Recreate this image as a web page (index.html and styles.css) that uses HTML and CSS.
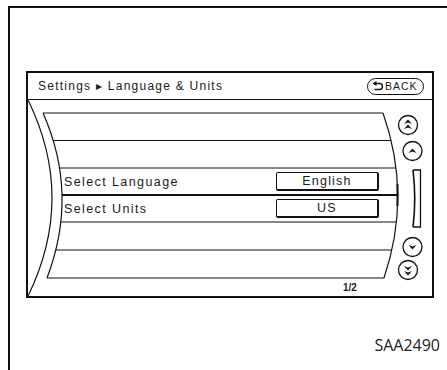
FILE: index.html
```html
<!DOCTYPE html>
<html lang="en">
<head>
    <meta charset="UTF-8">
    <meta name="viewport" content="width=device-width, initial-scale=1.0">
    <title>Settings - Language &amp; Units</title>
    <link rel="stylesheet" href="styles.css">
</head>
<body>
    <div class="frame">
        <div class="screen">
            <div class="header">
                <span class="title">Settings ▸ Language &amp; Units</span>
                <span class="back">
                    <svg class="back-icon" viewBox="0 0 12 10" width="12" height="10">
                        <path d="M4 2.5 H7.5 A3 3 0 0 1 7.5 8.5 H2.5" fill="none" stroke="#111" stroke-width="1.4"/>
                        <path d="M0.5 2.5 L4.5 0 L4.5 5 Z" fill="#111"/>
                    </svg>BACK
                </span>
            </div>
            <div class="panel">
                <!-- curved list frame, row lines and scroll buttons -->
                <svg class="art" viewBox="28 100 404 196" width="404" height="196">
                    <g fill="none" stroke="#111" stroke-width="1.2">
                        <path d="M28 100 Q76 198 28 296"/>
                        <path d="M43 113 Q79 194 47 278"/>
                        <path d="M383 113 Q412 195 384 278"/>
                        <line x1="43" y1="113" x2="383" y2="113"/>
                        <line x1="53.2" y1="140.5" x2="391.2" y2="140.5"/>
                        <line x1="59.5" y1="168" x2="396" y2="168"/>
                        <line x1="60.8" y1="222" x2="396.4" y2="222"/>
                        <line x1="55.8" y1="250" x2="391.8" y2="250"/>
                        <line x1="47" y1="278" x2="384" y2="278"/>
                        <line x1="62" y1="195" x2="398" y2="195" stroke-width="2.2"/>
                        <line x1="397.5" y1="184" x2="397.5" y2="206" stroke-width="2"/>

                        <circle cx="408" cy="125" r="9.5" stroke-width="1.3"/>
                        <circle cx="412.5" cy="151" r="9.5" stroke-width="1.3"/>
                        <circle cx="412.5" cy="247" r="9.5" stroke-width="1.3"/>
                        <circle cx="408" cy="270" r="9.5" stroke-width="1.3"/>

                        <path d="M413 170 H420.5 V227 H413" stroke-width="1.3"/>
                        <path d="M413 170 Q416.5 198.5 413 227" stroke-width="1.6"/>
                    </g>
                    <g fill="#111">
                        <path d="M404 124 L408 119.5 L412 124 L408 122.5 Z"/>
                        <path d="M404 129 L408 124.5 L412 129 L408 127.5 Z"/>
                        <path d="M408.5 153 L412.5 148.5 L416.5 153 L412.5 151.5 Z"/>
                        <path d="M408.5 245 L412.5 249.5 L416.5 245 L412.5 246.5 Z"/>
                        <path d="M404 266 L408 270.5 L412 266 L408 267.5 Z"/>
                        <path d="M404 271 L408 275.5 L412 271 L408 272.5 Z"/>
                    </g>
                </svg>
                <div class="list">
                    <div class="row">
                        <span class="label">Select Language</span>
                        <span class="value">English</span>
                    </div>
                    <div class="row">
                        <span class="label">Select Units</span>
                        <span class="value">US</span>
                    </div>
                </div>
                <div class="pager">1/2</div>
            </div>
        </div>
        <div class="code">SAA2490</div>
    </div>
</body>
</html>
```

FILE: styles.css
```css
body {
    margin: 0;
    background-color: #fff;
    font-family: "Liberation Sans", Arial, sans-serif;
    color: #1a1a1a;
    overflow: hidden;
}
.frame {
    margin: 6px 0 0 8px;
    height: 362px;
    border-left: 2px solid #111;
    border-top: 2px solid #111;
    display: flex;
    flex-direction: column;
}
.screen {
    margin: 63px 0 0 16px;
    width: 408px;
    height: 227px;
    box-sizing: border-box;
    border: 2px solid #111;
    display: flex;
    flex-direction: column;
}
.header {
    height: 27px;
    box-sizing: border-box;
    border-bottom: 1px solid #111;
    display: flex;
    align-items: center;
    justify-content: space-between;
    padding: 0 8px 0 10px;
}
.title {
    font-size: 12px;
    letter-spacing: 1.25px;
}
.back {
    display: inline-flex;
    align-items: center;
    gap: 1px;
    width: 57px;
    height: 17px;
    box-sizing: border-box;
    padding-left: 4px;
    border: 1.3px solid #111;
    border-radius: 9px;
    font-size: 10.5px;
    letter-spacing: 1px;
}
.back-icon {
    display: block;
}
.panel {
    position: relative;
    flex: 1;
    display: flex;
    flex-direction: column;
}
.art {
    position: absolute;
    left: 0;
    top: 0;
}
.list {
    position: relative;
    padding-top: 68px;
}
.row {
    height: 27px;
    display: flex;
    align-items: center;
    padding-left: 36px;
}
.label {
    width: 212px;
    font-size: 12.5px;
    letter-spacing: 1.4px;
}
.value {
    width: 103px;
    height: 19px;
    box-sizing: border-box;
    border: 1px solid #111;
    border-right-width: 2px;
    border-bottom-width: 2px;
    border-radius: 2px;
    display: flex;
    align-items: center;
    justify-content: center;
    font-size: 12.5px;
    letter-spacing: 1.2px;
}
.pager {
    position: relative;
    margin-top: auto;
    padding: 0 0 2px 315px;
    font-size: 10px;
    font-weight: bold;
    line-height: 12px;
}
.code {
    margin-top: auto;
    margin-bottom: 14px;
    align-self: flex-end;
    margin-right: 7px;
    font-family: "Open Sans", sans-serif;
    font-size: 16px;
    color: #222;
}
```
